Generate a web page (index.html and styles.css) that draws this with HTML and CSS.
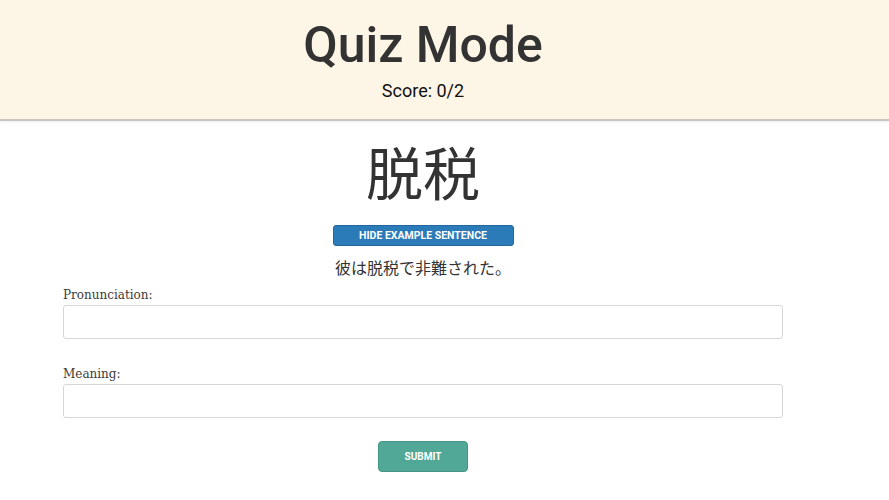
FILE: index.html
```html
<!DOCTYPE html>
<html lang="ja">
<head>
<meta charset="utf-8">
<link rel="stylesheet" href="styles.css">
</head>
<body>
<header class="header">
  <div class="header-inner">
    <h1 class="title">Quiz Mode</h1>
    <div class="score">Score: 0/2</div>
  </div>
</header>
<main class="page">
  <div class="word">脱税</div>
  <button class="btn-hide">HIDE EXAMPLE SENTENCE</button>
  <p class="sentence">彼は脱税で非難された。</p>
  <form class="form">
    <label class="field">
      <span class="label">Pronunciation:</span>
      <input class="input" type="text">
    </label>
    <label class="field field-2">
      <span class="label">Meaning:</span>
      <input class="input" type="text">
    </label>
    <div class="actions">
      <button type="button" class="btn-submit">SUBMIT</button>
    </div>
  </form>
</main>
</body>
</html>
```
FILE: styles.css
```css
html, body {
  margin: 0;
  padding: 0;
  background: #ffffff;
  font-family: Roboto, "Noto Sans CJK JP", sans-serif;
  color: #333333;
}
.header {
  background: #fdf5e6;
  height: 119px;
  border-bottom: 2px solid #c9c6c1;
  box-shadow: 0 1px 2px rgba(0,0,0,0.08);
}
.header-inner {
  width: 846px;
  text-align: center;
  padding-top: 15px;
}
.title {
  margin: 0;
  font-size: 50px;
  font-weight: 500;
  line-height: 60px;
  color: #333333;
}
.score {
  margin-top: 4px;
  font-size: 18px;
  line-height: 24px;
  color: #111111;
}
.page {
  width: 846px;
  display: flex;
  flex-direction: column;
  align-items: center;
}
.word {
  margin-top: 14px;
  font-family: "Noto Sans CJK JP", sans-serif;
  font-weight: 400;
  font-size: 57px;
  line-height: 70px;
  color: #333333;
}
.btn-hide {
  margin-top: 20px;
  width: 181px;
  height: 21px;
  padding: 0;
  border: 1px solid #2268a0;
  border-radius: 3px;
  background: #2b7bb9;
  color: #ffffff;
  font-family: Roboto, sans-serif;
  font-weight: 700;
  font-size: 10.5px;
  letter-spacing: 0;
}
.sentence {
  margin: 11px 0 0;
  font-family: "Noto Sans CJK JP", sans-serif;
  font-size: 16px;
  line-height: 20px;
  color: #333333;
}
.form {
  width: 720px;
  margin-top: 10px;
  display: flex;
  flex-direction: column;
}
.field {
  display: flex;
  flex-direction: column;
}
.field-2 {
  margin-top: 27px;
}
.label {
  font-family: "DejaVu Serif", serif;
  font-size: 12px;
  line-height: 17px;
  color: #3a3a3a;
}
.input {
  margin-top: 1px;
  height: 34px;
  box-sizing: border-box;
  border: 1px solid #d6d6d6;
  border-radius: 3px;
  background: #ffffff;
}
.actions {
  display: flex;
  justify-content: center;
  margin-top: 23px;
}
.btn-submit {
  width: 90px;
  height: 31px;
  border: 1px solid #44967f;
  border-radius: 4px;
  background: #52a896;
  color: #ffffff;
  font-family: Roboto, sans-serif;
  font-weight: 700;
  font-size: 10px;
}
```
